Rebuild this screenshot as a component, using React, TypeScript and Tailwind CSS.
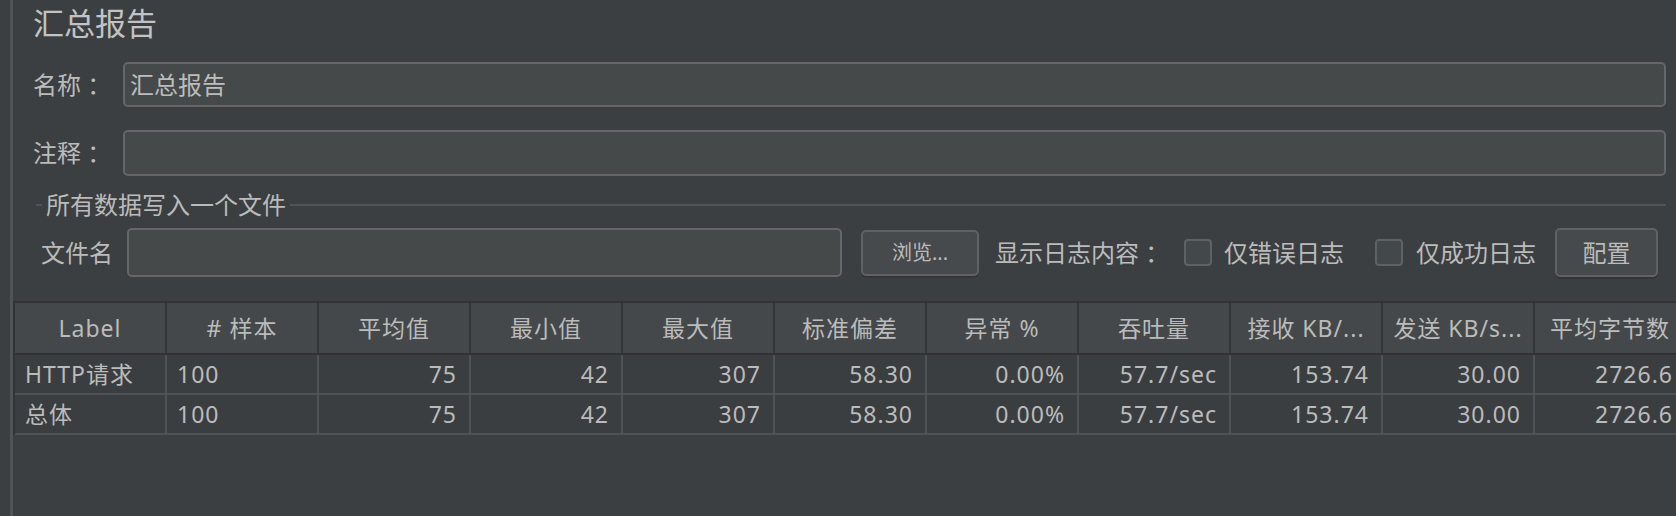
import React from "react";

const headers = [
  "Label",
  "# 样本",
  "平均值",
  "最小值",
  "最大值",
  "标准偏差",
  "异常 %",
  "吞吐量",
  "接收 KB/...",
  "发送 KB/s...",
  "平均字节数",
];

const rows = [
  ["HTTP请求", "100", "75", "42", "307", "58.30", "0.00%", "57.7/sec", "153.74", "30.00", "2726.6"],
  ["总体", "100", "75", "42", "307", "58.30", "0.00%", "57.7/sec", "153.74", "30.00", "2726.6"],
];

function TextInput({ value, className }: { value?: string; className: string }) {
  return (
    <div
      className={`flex items-center rounded-[5px] border-2 border-[#646667] bg-[#45494a] pl-[5px] text-[24px] text-[#bcbcbc] ${className}`}
    >
      {value}
    </div>
  );
}

function Checkbox() {
  return (
    <div className="h-[27px] w-[28px] shrink-0 rounded-[4px] border-2 border-[#5f6263] bg-[#43494a]" />
  );
}

export default function App() {
  return (
    <div className="flex h-[516px] w-[1676px] overflow-hidden bg-[#3c3f41] font-['Noto_Sans','Noto_Sans_CJK_SC',sans-serif] text-[#bbbbbb]">
      <div className="w-[10px] shrink-0" />
      <div className="w-[3px] shrink-0 bg-[#515456]" />
      <div className="flex min-w-0 flex-1 flex-col">
        {/* title */}
        <div className="mt-[3px] pl-[20px] text-[31px] leading-[40px] text-[#c3c3c3]">汇总报告</div>

        {/* name */}
        <div className="mt-[19px] flex items-center pl-[20px] pr-[10px]">
          <div className="w-[90px] shrink-0 text-[24px]">名称 ：</div>
          <TextInput value="汇总报告" className="h-[45px] flex-1" />
        </div>

        {/* comment */}
        <div className="mt-[23px] flex items-center pl-[20px] pr-[10px]">
          <div className="w-[90px] shrink-0 text-[24px]">注释 ：</div>
          <TextInput className="h-[46px] flex-1" />
        </div>

        {/* fieldset legend */}
        <div className="mt-[17px] flex h-[24px] items-center pl-[23px] pr-[10px]">
          <div className="h-[2px] w-[6px] bg-[#515456]" />
          <div className="px-[4px] text-[24px] leading-[24px]">所有数据写入一个文件</div>
          <div className="h-[2px] flex-1 bg-[#515456]" />
        </div>

        {/* file row */}
        <div className="mt-[11px] flex items-center pl-[28px] text-[24px]">
          <div className="w-[86px] shrink-0">文件名</div>
          <TextInput className="h-[49px] w-[715px] shrink-0" />
          <button className="ml-[19px] flex h-[46px] w-[118px] shrink-0 items-center justify-center rounded-[5px] border-2 border-[#5f6263] bg-[#474a4c] text-[20px] text-[#bbbbbb] shadow-[0_2px_0_#333537]">
            浏览...
          </button>
          <div className="ml-[16px] w-[189px] shrink-0 whitespace-nowrap">显示日志内容 ：</div>
          <Checkbox />
          <div className="ml-[12px] w-[151px] shrink-0">仅错误日志</div>
          <Checkbox />
          <div className="ml-[13px] w-[139px] shrink-0">仅成功日志</div>
          <button className="flex h-[49px] w-[103px] shrink-0 items-center justify-center rounded-[5px] border-2 border-[#5f6263] bg-[#474a4c] text-[24px] text-[#bbbbbb] shadow-[0_2px_0_#333537]">
            配置
          </button>
        </div>

        {/* table */}
        <div className="mt-[24px] w-[1672px] border-l-2 border-t-2 border-[#313335]">
          <div className="grid h-[52px] grid-cols-[repeat(11,152px)] border-b-2 border-[#2f3133] bg-[#45484a]">
            {headers.map((h, i) => (
              <div
                key={i}
                className="flex items-center justify-center whitespace-nowrap border-r-2 border-[#333537] text-[23px] tracking-[1px]"
              >
                {h}
              </div>
            ))}
          </div>
          {rows.map((r, ri) => (
            <div
              key={ri}
              className="grid h-[40px] grid-cols-[repeat(11,152px)] border-b-2 border-[#4f5254] bg-[#3b3e40]"
            >
              {r.map((c, ci) => (
                <div
                  key={ci}
                  className={`flex items-center whitespace-nowrap border-r-2 border-[#4f5254] text-[23px] tracking-[1px] ${
                    ci < 2 ? "justify-start pl-[10px]" : "justify-end pr-[12px]"
                  }`}
                >
                  {c}
                </div>
              ))}
            </div>
          ))}
        </div>
      </div>
    </div>
  );
}
